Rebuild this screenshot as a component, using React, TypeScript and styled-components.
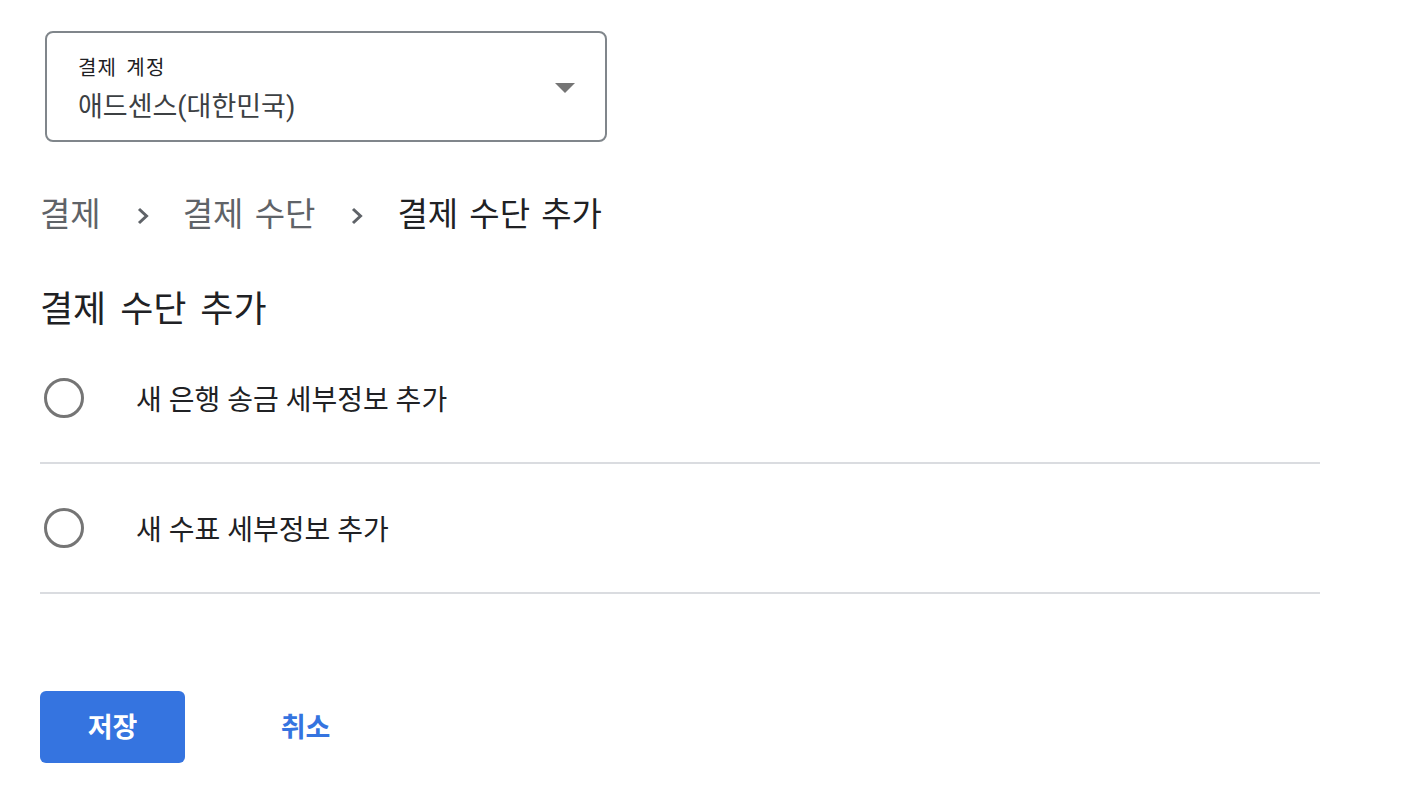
import React from "react";
import styled, { createGlobalStyle } from "styled-components";

const GlobalStyle = createGlobalStyle`
  html, body {
    margin: 0;
    padding: 0;
    background: #ffffff;
  }
  body {
    font-family: Roboto, "Noto Sans CJK KR", sans-serif;
    color: #202124;
  }
`;

const Page = styled.div`
  padding: 31px 0 0 40px;
  width: 1280px;
`;

const Select = styled.div`
  margin-left: 5px;
  width: 562px;
  height: 111px;
  box-sizing: border-box;
  border: 2px solid #80868b;
  border-radius: 8px;
  display: flex;
  align-items: center;
  justify-content: space-between;
  padding: 0 30px 0 31px;
  cursor: pointer;
`;

const SelectText = styled.div`
  display: flex;
  flex-direction: column;
  gap: 8px;
  margin-top: 6px;
`;

const SelectLabel = styled.span`
  font-size: 20px;
  letter-spacing: 1.2px;
  word-spacing: 3px;
  line-height: 26px;
  color: #202124;
`;

const SelectValue = styled.span`
  font-size: 27px;
  line-height: 36px;
  color: #3c4043;
`;

const Caret = styled.span`
  width: 0;
  height: 0;
  border-left: 10px solid transparent;
  border-right: 10px solid transparent;
  border-top: 10px solid #757575;
  margin-top: 2px;
`;

const Breadcrumb = styled.nav`
  display: flex;
  align-items: center;
  margin-top: 52px;
  height: 42px;
`;

const Crumb = styled.span<{ $current?: boolean }>`
  font-size: 33px;
  word-spacing: 3px;
  line-height: 42px;
  color: ${(p) => (p.$current ? "#202124" : "#5f6368")};
`;

const Chevron = styled.svg`
  width: 14px;
  height: 18px;
  margin: 2px 33px 0 35px;
  fill: none;
  stroke: #5f6368;
  stroke-width: 3;
`;

const Heading = styled.h1`
  margin: 52px 0 0;
  font-size: 36px;
  font-weight: 400;
  word-spacing: 5px;
  line-height: 44px;
`;

const Options = styled.div`
  margin-top: 2px;
  width: 1280px;
`;

const Option = styled.label`
  display: flex;
  align-items: center;
  height: 128px;
  border-bottom: 2px solid #dadce0;
  cursor: pointer;
`;

const Radio = styled.span`
  width: 40px;
  height: 40px;
  box-sizing: border-box;
  border-radius: 50%;
  border: 3px solid #757575;
  margin-left: 4px;
  flex-shrink: 0;
`;

const OptionText = styled.span`
  margin-left: 52px;
  font-size: 28px;
  color: #202124;
`;

const Actions = styled.div`
  display: flex;
  gap: 48px;
  margin-top: 97px;
`;

const Button = styled.button<{ $primary?: boolean }>`
  width: 145px;
  height: 72px;
  padding: 0 0 3px;
  border: none;
  border-radius: 6px;
  font-family: Roboto, "Noto Sans CJK KR", sans-serif;
  font-size: 27px;
  font-weight: 700;
  background: ${(p) => (p.$primary ? "#3574e0" : "transparent")};
  color: ${(p) => (p.$primary ? "#ffffff" : "#3574e0")};
  cursor: pointer;
`;

const ChevronIcon = () => (
  <Chevron viewBox="0 0 14 18">
    <polyline points="3,2 10.5,9 3,16" />
  </Chevron>
);

export default function App() {
  return (
    <>
      <GlobalStyle />
      <Page>
        <Select>
          <SelectText>
            <SelectLabel>결제 계정</SelectLabel>
            <SelectValue>애드센스(대한민국)</SelectValue>
          </SelectText>
          <Caret />
        </Select>
        <Breadcrumb>
          <Crumb>결제</Crumb>
          <ChevronIcon />
          <Crumb>결제 수단</Crumb>
          <ChevronIcon />
          <Crumb $current>결제 수단 추가</Crumb>
        </Breadcrumb>
        <Heading>결제 수단 추가</Heading>
        <Options>
          <Option>
            <Radio />
            <OptionText>새 은행 송금 세부정보 추가</OptionText>
          </Option>
          <Option>
            <Radio />
            <OptionText>새 수표 세부정보 추가</OptionText>
          </Option>
        </Options>
        <Actions>
          <Button $primary>저장</Button>
          <Button>취소</Button>
        </Actions>
      </Page>
    </>
  );
}
